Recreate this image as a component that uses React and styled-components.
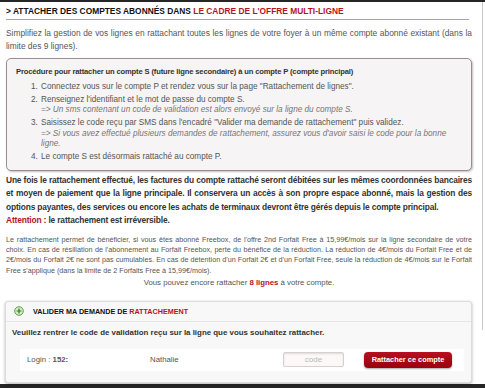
import React from "react";
import styled, { createGlobalStyle } from "styled-components";

const GlobalStyle = createGlobalStyle`
  html, body { margin: 0; padding: 0; background: #fff; }
  body {
    font-family: "Liberation Sans", Arial, sans-serif;
    color: #555;
    width: 485px;
    height: 388px;
    overflow: hidden;
  }
`;

const RED = "#b3141f";
const NARROW = `"Liberation Sans Narrow", "Arial Narrow", "Liberation Sans", sans-serif`;

const Screen = styled.div`
  display: flex;
  flex-direction: column;
  height: 388px;
`;

const DarkBand = styled.div`
  height: ${(p) => p.h}px;
  background: #262626;
  flex-shrink: 0;
`;

const Main = styled.div`
  position: relative;
  flex: 1;
  width: 483px;
  padding: 0 11px 0 6px;
  box-sizing: border-box;

  &::after {
    content: "";
    position: absolute;
    top: 0;
    right: 0;
    width: 1px;
    height: 328px;
    background: #c8c8c8;
  }
`;

const Title = styled.h2`
  margin: 0 3px 0 0;
  padding: 4px 0 3px;
  font-family: ${NARROW};
  font-size: 8.4px;
  font-weight: bold;
  line-height: 10px;
  color: #111;
  border-bottom: 1px solid #a5a5a5;
`;

const Red = styled.span`
  color: ${RED};
  font-weight: ${(p) => (p.bold ? "bold" : "inherit")};
`;

const Intro = styled.p`
  margin: 7px 0 0;
  font-size: 8.4px;
  line-height: 12.5px;
  text-align: justify;
  color: #555;
`;

const ProcBox = styled.div`
  margin-top: 6px;
  padding: 7px 10px 5px 9px;
  border: 1.5px solid #a08a90;
  border-radius: 5px;
  background: #f6f4f4;
  box-shadow: 1px 1px 2px rgba(0, 0, 0, 0.25);
`;

const ProcTitle = styled.div`
  font-size: 7.6px;
  font-weight: bold;
  letter-spacing: -0.15px;
  line-height: 11px;
  color: #333;
  margin-bottom: 5px;
`;

const Steps = styled.ol`
  margin: 0;
  padding-left: 24px;
  font-size: 8.2px;
  line-height: 10.5px;
  color: #555;
`;

const Step = styled.li`
  margin-bottom: 2.3px;
  padding-left: 1px;
`;

const Note = styled.em`
  display: block;
  color: #777;
`;

const Strong = styled.p`
  margin: 3px 0 0;
  font-size: 8.4px;
  font-weight: bold;
  letter-spacing: -0.15px;
  line-height: 13.6px;
  text-align: justify;
  color: #333;
`;

const Small = styled.p`
  margin: 7px 0 0;
  font-size: 7.2px;
  line-height: 10.2px;
  text-align: justify;
  color: #555;
`;

const Remaining = styled.p`
  margin: 1px 0 0;
  font-size: 7.8px;
  line-height: 11px;
  text-align: center;
  color: #555;
`;

const ValidBox = styled.div`
  margin: 13px 0 0 -1px;
  border: 1px solid #dcdcdc;
  border-radius: 3px;
  background: #f8f8f8;
  box-shadow: 0 1px 3px rgba(0, 0, 0, 0.3);
`;

const ValidHead = styled.div`
  display: flex;
  align-items: center;
  gap: 9px;
  height: 19px;
  padding-left: 8px;
  border-bottom: 1px solid #e6e6e6;
  font-family: ${NARROW};
  font-size: 7.2px;
  font-weight: bold;
  color: #111;
`;

const ValidBody = styled.div`
  padding: 5px 7px 11px 6px;
`;

const ValidText = styled.div`
  font-size: 7.9px;
  font-weight: bold;
  line-height: 11px;
  color: #333;
`;

const LoginRow = styled.div`
  display: flex;
  align-items: center;
  height: 22px;
  margin: 11px 0 0 8px;
  padding: 0 12px 0 7px;
  background: #fff;
  border-radius: 2px;
  font-size: 7.8px;
  color: #555;
`;

const Field = styled.span`
  width: ${(p) => p.w}px;
  flex-shrink: 0;
  white-space: nowrap;
  overflow: hidden;
`;

const CodeInput = styled.input`
  width: 61px;
  height: 15px;
  box-sizing: border-box;
  margin-right: 20px;
  border: 1px solid #d8d0d0;
  border-radius: 2px;
  background: #fcf8f8;
  box-shadow: inset 0 1px 2px rgba(0, 0, 0, 0.12);
  font-family: "Liberation Sans", Arial, sans-serif;
  font-size: 8px;
  text-align: center;
  color: #555;
  outline: none;
  padding: 0;

  &::placeholder { color: #b8b8b8; }
`;

const AttachButton = styled.button`
  width: 90px;
  height: 16px;
  padding: 0;
  border: none;
  border-radius: 4px;
  background: linear-gradient(#b8101f, #99000f);
  box-shadow: 0 1px 2px rgba(0, 0, 0, 0.35);
  font-family: "Liberation Sans", Arial, sans-serif;
  font-size: 7.4px;
  font-weight: bold;
  color: #fff;
`;

const PlusIcon = () => (
  <svg width="10" height="10" viewBox="0 0 10 10">
    <circle cx="5" cy="5" r="4.3" fill="#d6eccb" stroke="#5aa23c" strokeWidth="1" />
    <path d="M5 2.6v4.8M2.6 5h4.8" stroke="#2f7a1c" strokeWidth="1.2" />
  </svg>
);

const App = () => {
  return (
    <>
      <GlobalStyle />
      <Screen>
        <DarkBand h={2} />
        <Main>
          <Title>
            &gt; ATTACHER DES COMPTES ABONNÉS DANS <Red>LE CADRE DE L'OFFRE MULTI-LIGNE</Red>
          </Title>
          <Intro>
            Simplifiez la gestion de vos lignes en rattachant toutes les lignes de votre foyer à un même
            compte abonné existant (dans la limite des 9 lignes).
          </Intro>

          <ProcBox>
            <ProcTitle>
              Procédure pour rattacher un compte S (future ligne secondaire) à un compte P (compte principal)
            </ProcTitle>
            <Steps>
              <Step>Connectez vous sur le compte P et rendez vous sur la page "Rattachement de lignes".</Step>
              <Step>
                Renseignez l'identifiant et le mot de passe du compte S.
                <Note>=&gt; Un sms contenant un code de validation est alors envoyé sur la ligne du compte S.</Note>
              </Step>
              <Step>
                Saisissez le code reçu par SMS dans l'encadré "Valider ma demande de rattachement" puis validez.
                <Note>
                  =&gt; Si vous avez effectué plusieurs demandes de rattachement, assurez vous d'avoir saisi le
                  code pour la bonne ligne.
                </Note>
              </Step>
              <Step>Le compte S est désormais rattaché au compte P.</Step>
            </Steps>
          </ProcBox>

          <Strong>
            Une fois le rattachement effectué, les factures du compte rattaché seront débitées sur les mêmes
            coordonnées bancaires et moyen de paiement que la ligne principale. Il conservera un accès à son
            propre espace abonné, mais la gestion des options payantes, des services ou encore les achats de
            terminaux devront être gérés depuis le compte principal.
            <br />
            <Red>Attention</Red> : le rattachement est irréversible.
          </Strong>

          <Small>
            Le rattachement permet de bénéficier, si vous êtes abonné Freebox, de l'offre 2nd Forfait Free à
            15,99€/mois sur la ligne secondaire de votre choix. En cas de résiliation de l'abonnement au Forfait
            Freebox, perte du bénéfice de la réduction. La réduction de 4€/mois du Forfait Free et de 2€/mois du
            Forfait 2€ ne sont pas cumulables. En cas de détention d'un Forfait 2€ et d'un Forfait Free, seule la
            réduction de 4€/mois sur le Forfait Free s'applique (dans la limite de 2 Forfaits Free à 15,99€/mois).
          </Small>

          <Remaining>
            Vous pouvez encore rattacher <Red bold>8 lignes</Red> à votre compte.
          </Remaining>

          <ValidBox>
            <ValidHead>
              <PlusIcon />
              <span>
                VALIDER MA DEMANDE DE <Red>RATTACHEMENT</Red>
              </span>
            </ValidHead>
            <ValidBody>
              <ValidText>Veuillez rentrer le code de validation reçu sur la ligne que vous souhaitez rattacher.</ValidText>
              <LoginRow>
                <Field w={123}>
                  Login : <b>152:</b>
                </Field>
                <Field w={133}>Nathalie</Field>
                <CodeInput placeholder="code" />
                <AttachButton>Rattacher ce compte</AttachButton>
              </LoginRow>
            </ValidBody>
          </ValidBox>
        </Main>
        <DarkBand h={4} />
      </Screen>
    </>
  );
};

export default App;
